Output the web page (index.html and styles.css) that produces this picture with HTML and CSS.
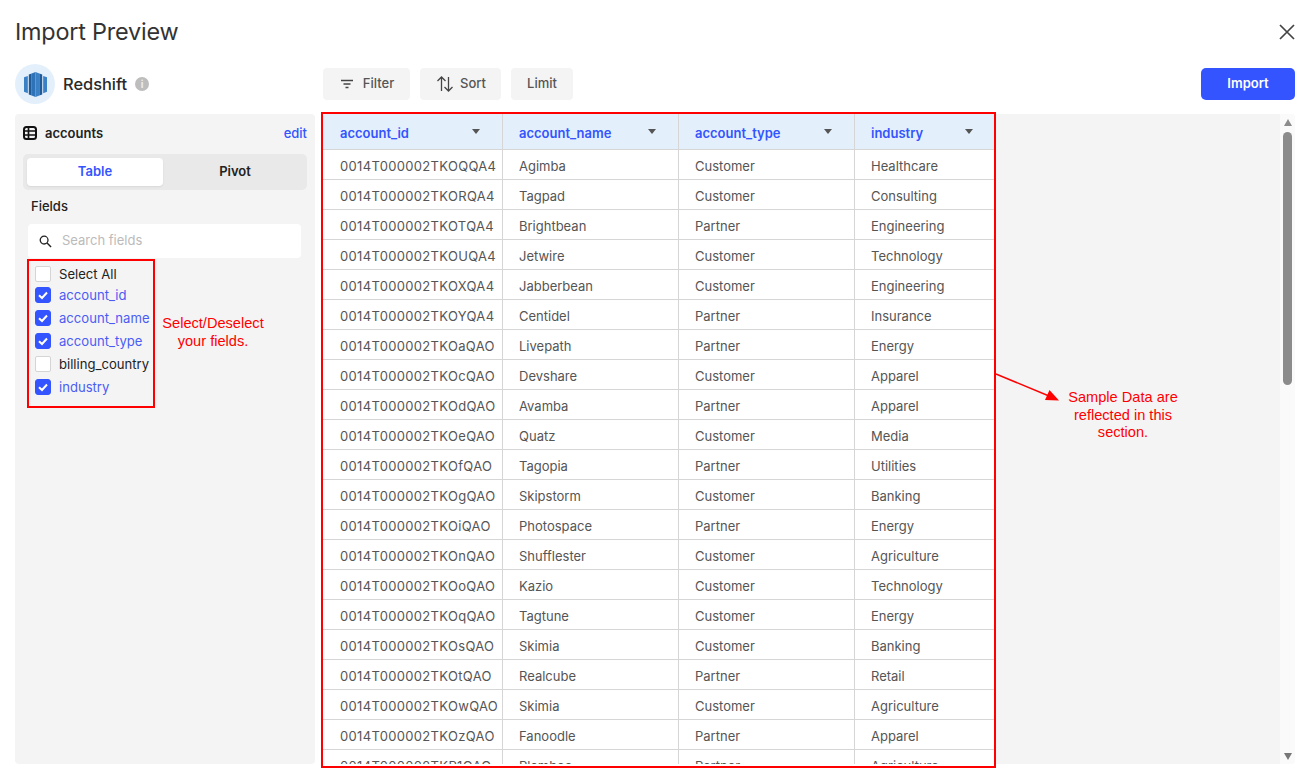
FILE: index.html
```html
<!DOCTYPE html>
<html lang="en">
<head>
<meta charset="utf-8">
<title>Import Preview</title>
<link rel="stylesheet" href="styles.css">
</head>
<body>
<div class="app">
  <header class="title-bar">
    <h1 class="title">Import Preview</h1>
    <svg class="close" viewBox="0 0 16 16" width="16" height="16"><path d="M1 1L15 15M15 1L1 15" stroke="#444" stroke-width="1.7" fill="none"/></svg>
  </header>
  <div class="toolbar">
    <div class="source">
      <span class="logo">
        <svg viewBox="0 0 24 26" width="23" height="25">
          <path d="M0 5.500L4 4V22L0 20.500Z" fill="#3b80c4"/>
          <path d="M5 2.500L8 1.500V24.500L5 23.500Z" fill="#205b99"/>
          <path d="M8 1.500L12 0V26L8 24.500Z" fill="#2e73b8"/>
          <path d="M12 0L16 1.500V24.500L12 26Z" fill="#3b80c4"/>
          <path d="M16 1.500L19 2.500V23.500L16 24.500Z" fill="#205b99"/>
          <path d="M20 4L24 5.500V20.500L20 22Z" fill="#3b80c4"/>
        </svg>
      </span>
      <span class="source-name">Redshift</span>
      <span class="info">i</span>
    </div>
    <div class="actions">
      <button class="tool filter">
        <svg viewBox="0 0 14 10" width="14" height="10"><path d="M1 1.500H13M3.500 5H10.500M5.500 8.500H8.500" stroke="#444" stroke-width="1.300" fill="none"/></svg>
        Filter
      </button>
      <button class="tool sort">
        <svg viewBox="0 0 18 18" width="18" height="18"><path d="M5.500 16V2M1.500 6L5.500 2L9.500 6M12.500 2V16M8.500 12L12.500 16L16.500 12" stroke="#444" stroke-width="1.300" fill="none"/></svg>
        Sort
      </button>
      <button class="tool limit">Limit</button>
    </div>
    <button class="import">Import</button>
  </div>
  <div class="content">
    <aside class="sidebar">
      <div class="table-head">
        <svg viewBox="0 0 14 14" width="14" height="14"><rect x="1" y="1" width="12" height="12" rx="2.500" fill="none" stroke="#111" stroke-width="2"/><path d="M1 5H13M1 9H13M5.500 1V13" stroke="#111" stroke-width="1.700" fill="none"/></svg>
        <span class="table-name">accounts</span>
        <a class="edit">edit</a>
      </div>
      <div class="segmented">
        <span class="seg active">Table</span>
        <span class="seg pivot">Pivot</span>
      </div>
      <div class="fields-label">Fields</div>
      <div class="search">
        <svg viewBox="0 0 14 14" width="13" height="13"><circle cx="5.500" cy="5.500" r="4.200" fill="none" stroke="#222" stroke-width="1.400"/><path d="M8.700 8.700L13 13" stroke="#222" stroke-width="1.500"/></svg>
        <span>Search fields</span>
      </div>
      <ul class="field-list">
        <li class="field first"><span class="box"></span>Select All</li>
        <li class="field on"><span class="box"><svg viewBox="0 0 16 16" width="16" height="16"><path d="M4 8.200L7 11L12 5.500" stroke="#fff" stroke-width="2" fill="none"/></svg></span>account_id</li>
        <li class="field on"><span class="box"><svg viewBox="0 0 16 16" width="16" height="16"><path d="M4 8.200L7 11L12 5.500" stroke="#fff" stroke-width="2" fill="none"/></svg></span>account_name</li>
        <li class="field on"><span class="box"><svg viewBox="0 0 16 16" width="16" height="16"><path d="M4 8.200L7 11L12 5.500" stroke="#fff" stroke-width="2" fill="none"/></svg></span>account_type</li>
        <li class="field"><span class="box"></span>billing_country</li>
        <li class="field on"><span class="box"><svg viewBox="0 0 16 16" width="16" height="16"><path d="M4 8.200L7 11L12 5.500" stroke="#fff" stroke-width="2" fill="none"/></svg></span>industry</li>
      </ul>
    </aside>
    <main class="preview">
      <div class="table-area">
        <table class="data">
          <thead>
            <tr>
              <th class="c1"><span class="th-in">account_id<i class="caret"></i></span></th>
              <th class="c2"><span class="th-in">account_name<i class="caret"></i></span></th>
              <th class="c3"><span class="th-in">account_type<i class="caret"></i></span></th>
              <th class="c4"><span class="th-in">industry<i class="caret"></i></span></th>
            </tr>
          </thead>
          <tbody>
            <tr><td>0014T000002TKOQQA4</td><td>Agimba</td><td>Customer</td><td>Healthcare</td></tr>
            <tr><td>0014T000002TKORQA4</td><td>Tagpad</td><td>Customer</td><td>Consulting</td></tr>
            <tr><td>0014T000002TKOTQA4</td><td>Brightbean</td><td>Partner</td><td>Engineering</td></tr>
            <tr><td>0014T000002TKOUQA4</td><td>Jetwire</td><td>Customer</td><td>Technology</td></tr>
            <tr><td>0014T000002TKOXQA4</td><td>Jabberbean</td><td>Customer</td><td>Engineering</td></tr>
            <tr><td>0014T000002TKOYQA4</td><td>Centidel</td><td>Partner</td><td>Insurance</td></tr>
            <tr><td>0014T000002TKOaQAO</td><td>Livepath</td><td>Partner</td><td>Energy</td></tr>
            <tr><td>0014T000002TKOcQAO</td><td>Devshare</td><td>Customer</td><td>Apparel</td></tr>
            <tr><td>0014T000002TKOdQAO</td><td>Avamba</td><td>Partner</td><td>Apparel</td></tr>
            <tr><td>0014T000002TKOeQAO</td><td>Quatz</td><td>Customer</td><td>Media</td></tr>
            <tr><td>0014T000002TKOfQAO</td><td>Tagopia</td><td>Partner</td><td>Utilities</td></tr>
            <tr><td>0014T000002TKOgQAO</td><td>Skipstorm</td><td>Customer</td><td>Banking</td></tr>
            <tr><td>0014T000002TKOiQAO</td><td>Photospace</td><td>Partner</td><td>Energy</td></tr>
            <tr><td>0014T000002TKOnQAO</td><td>Shufflester</td><td>Customer</td><td>Agriculture</td></tr>
            <tr><td>0014T000002TKOoQAO</td><td>Kazio</td><td>Customer</td><td>Technology</td></tr>
            <tr><td>0014T000002TKOqQAO</td><td>Tagtune</td><td>Customer</td><td>Energy</td></tr>
            <tr><td>0014T000002TKOsQAO</td><td>Skimia</td><td>Customer</td><td>Banking</td></tr>
            <tr><td>0014T000002TKOtQAO</td><td>Realcube</td><td>Partner</td><td>Retail</td></tr>
            <tr><td>0014T000002TKOwQAO</td><td>Skimia</td><td>Customer</td><td>Agriculture</td></tr>
            <tr><td>0014T000002TKOzQAO</td><td>Fanoodle</td><td>Partner</td><td>Apparel</td></tr>
            <tr><td>0014T000002TKP1QAO</td><td>Plambee</td><td>Partner</td><td>Agriculture</td></tr>
          </tbody>
        </table>
      </div>
      <div class="scrollbar">
        <i class="arrow up"></i>
        <div class="thumb"></div>
        <i class="arrow down"></i>
      </div>
    </main>
  </div>
</div>
<div class="frame frame-fields"></div>
<div class="frame frame-table"></div>
<div class="note note-fields">Select/Deselect<br>your fields.</div>
<div class="note note-table">Sample Data are<br>reflected in this<br>section.</div>
<svg class="note-arrow" viewBox="0 0 66 30" width="66" height="30"><path d="M1 1L54 23" stroke="#f00" stroke-width="1.400"/><path d="M64 27.500L50 27L54.500 17Z" fill="#f00"/></svg>
</body>
</html>
```

FILE: styles.css
```css
* { box-sizing: border-box; }
html, body { margin: 0; padding: 0; height: 100%; overflow: hidden; background: #fff; }
body { font-family: Inter, "Liberation Sans", sans-serif; color: #222; position: relative; }
button { font-family: inherit; border: 0; }

.app { height: 778px; padding: 0 14px 14px 15px; display: flex; flex-direction: column; }

.title-bar { height: 64px; display: flex; align-items: center; justify-content: space-between; flex: none; }
.title { margin: 0; font-size: 23.4px; font-weight: 400; color: #333; position: relative; top: -1px; letter-spacing: -0.2px; }
.close { position: relative; top: 0; }

.toolbar { height: 40px; display: flex; align-items: center; flex: none; }
.source { width: 308px; display: flex; align-items: center; flex: none; }
.logo { width: 40px; height: 40px; border-radius: 50%; background: #e3f0fc; display: flex; align-items: center; justify-content: center; }
.source-name { margin-left: 8px; font-size: 16.4px; font-weight: 500; color: #2a2a2a; }
.info { width: 14px; height: 14px; margin-left: 8px; border-radius: 50%; background: #bdbdbd; color: #eee; font-size: 10px; font-weight: 700; text-align: center; line-height: 14px; }

.actions { display: flex; gap: 10px; flex: 1; }
.tool { height: 32px; padding: 0 0 2px; border-radius: 4px; background: #f4f4f4; color: #555; font-size: 13px; font-weight: 500; display: flex; align-items: center; justify-content: center; }
.tool svg { position: relative; top: 1px; }
.filter { width: 87px; gap: 9px; padding-left: 1px; }
.sort { width: 81px; gap: 6px; padding-left: 1px; }
.limit { width: 62px; }
.import { width: 94px; height: 32px; padding: 0 0 2px; border-radius: 5px; background: #3354ff; color: #fff; font-size: 13px; font-weight: 600; }

.content { flex: 1; min-height: 0; margin-top: 10px; display: flex; gap: 8px; }

.sidebar { width: 300px; flex: none; background: #f4f4f4; border-radius: 4px; padding: 0 8px; }
.table-head { height: 40px; padding-bottom: 2px; display: flex; align-items: center; }
.table-name { margin-left: 8px; font-size: 13px; font-weight: 600; color: #222; flex: 1; }
.edit { font-size: 13px; font-weight: 500; color: #3354ff; }
.segmented { height: 36px; background: #e9e9e9; border-radius: 5px; padding: 4px; display: flex; }
.seg { flex: 1; padding-bottom: 2px; display: flex; align-items: center; justify-content: center; font-size: 13px; font-weight: 600; color: #222; border-radius: 4px; }
.seg.pivot { margin-right: -4px; }
.seg.active { flex: none; width: 136px; background: #fff; color: #3354ff; box-shadow: 0 1px 2px rgba(0, 0, 0, .08); }
.fields-label { margin: 8px 0 0 8px; height: 24px; line-height: 16px; font-size: 13px; font-weight: 500; color: #222; }
.search { margin: 2px 6px 0 5px; height: 34px; background: #fff; border-radius: 4px; padding: 0 11px 2px; display: flex; align-items: center; gap: 10px; font-size: 13px; color: #bbb; }
.search svg { position: relative; top: 1px; }
.field-list { list-style: none; margin: 5px 0 0 12px; padding: 0; }
.field { height: 23px; display: flex; align-items: center; gap: 8px; font-size: 13.1px; color: #222; }
.field.first { height: 20px; padding-top: 2px; }
.box { width: 16px; height: 16px; flex: none; background: #fff; border: 1px solid #d5d5d5; border-radius: 2px; position: relative; }
.box svg { position: absolute; left: -1px; top: -1px; display: block; }
.field.on { color: #4a5cf5; }
.field.on .box { background: #3354ff; border-color: #3354ff; border-radius: 3px; }

.preview { flex: 1; min-width: 0; display: flex; background: #f4f4f4; border-radius: 4px; overflow: hidden; }
.table-area { flex: 1; min-width: 0; overflow: hidden; }
.data { border-collapse: separate; border-spacing: 0; table-layout: fixed; width: 672px; background: #fff; font-size: 13px; }
.c1 { width: 180px; }
.c2, .c3 { width: 176px; }
.c4 { width: 140px; }
.data th { height: 36px; padding: 2px 0 0; background: #e3f0fc; border-right: 1px solid #d6d6d6; border-bottom: 1px solid #d6d6d6; text-align: left; color: #3354ff; font-weight: 600; }
.th-in { display: flex; align-items: center; justify-content: space-between; padding: 0 22px 0 16px; }
.data th:first-child .th-in { padding-left: 17px; }
.caret { width: 0; height: 0; border-left: 4.500px solid transparent; border-right: 4.500px solid transparent; border-top: 5px solid #555; position: relative; top: -1px; }
.data td { height: 30px; padding: 3px 0 0 16px; border-right: 1px solid #d6d6d6; border-bottom: 1px solid #d6d6d6; color: #555; white-space: nowrap; overflow: hidden; }
.data td:first-child { padding-left: 17px; letter-spacing: .33px; }
.data th:last-child, .data td:last-child { border-right: 0; }

.scrollbar { width: 15px; flex: none; background: #fafafa; display: flex; flex-direction: column; align-items: center; padding: 5px 0 4px; position: relative; }
.thumb { width: 9px; height: 253px; margin-top: 6px; border-radius: 5px; background: #8c8c8c; }
.arrow { width: 0; height: 0; border-left: 4.500px solid transparent; border-right: 4.500px solid transparent; }
.arrow.up { border-bottom: 7px solid #8c8c8c; }
.arrow.down { margin-top: auto; border-top: 7px solid #777; }

.frame { position: absolute; border: 2px solid #f00; pointer-events: none; }
.frame-fields { left: 27px; top: 259px; width: 128px; height: 149px; }
.frame-table { left: 321px; top: 112px; width: 675px; height: 656px; }
.note { position: absolute; font-family: "Liberation Sans", Arial, sans-serif; color: #f00; font-size: 14.6px; line-height: 17.500px; text-align: center; }
.note-fields { left: 158px; top: 315px; width: 110px; }
.note-table { left: 1048px; top: 389px; width: 150px; }
.note-arrow { position: absolute; left: 995px; top: 373px; }
```
